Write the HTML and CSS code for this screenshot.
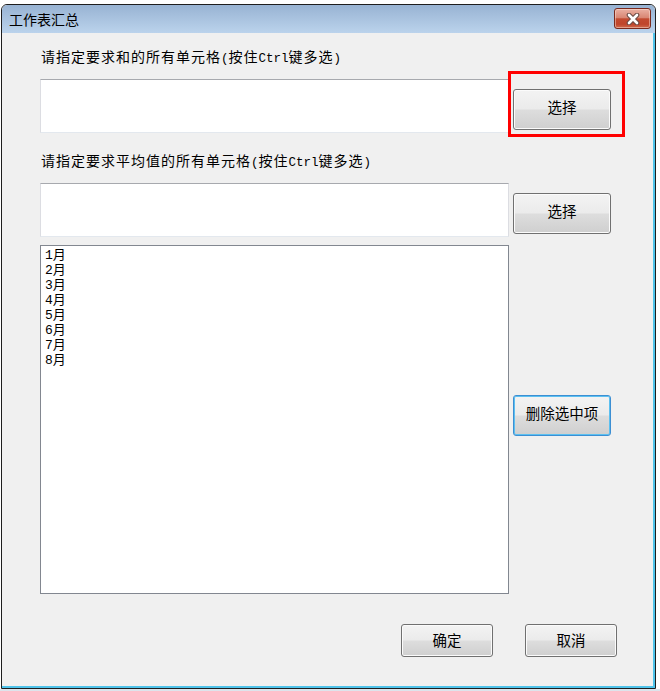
FILE: index.html
```html
<!DOCTYPE html>
<html lang="zh-CN">
<head>
<meta charset="utf-8">
<title>工作表汇总</title>
<link rel="stylesheet" href="styles.css">
</head>
<body>
<div class="window">
  <div class="titlebar">
    <span class="title">工作表汇总</span>
    <button class="close" type="button" aria-label="关闭">
      <svg width="14" height="12" viewBox="0 0 14 12">
        <path d="M3 2 L11 10 M11 2 L3 10" stroke="#6b4a44" stroke-width="4.6" stroke-linecap="round" fill="none"/>
        <path d="M3 2 L11 10 M11 2 L3 10" stroke="#ffffff" stroke-width="2.6" stroke-linecap="round" fill="none"/>
      </svg>
    </button>
  </div>
  <div class="client">
    <div class="label">请指定要求和的所有单元格<span class="a">(</span>按住<span class="a">Ctrl</span>键多选<span class="a">)</span></div>
    <div class="row">
      <div class="textbox"></div>
      <button class="btn btn-side" type="button">选择</button>
    </div>
    <div class="label label2">请指定要求平均值的所有单元格<span class="a">(</span>按住<span class="a">Ctrl</span>键多选<span class="a">)</span></div>
    <div class="row">
      <div class="textbox"></div>
      <button class="btn btn-side" type="button">选择</button>
    </div>
    <div class="row row3">
      <div class="listbox">
        <div class="item">1月</div>
        <div class="item">2月</div>
        <div class="item">3月</div>
        <div class="item">4月</div>
        <div class="item">5月</div>
        <div class="item">6月</div>
        <div class="item">7月</div>
        <div class="item">8月</div>
      </div>
      <button class="btn btn-side btn-focus" type="button">删除选中项</button>
    </div>
    <div class="footer">
      <button class="btn btn-foot" type="button">确定</button>
      <button class="btn btn-foot" type="button">取消</button>
    </div>
    <div class="highlight"></div>
  </div>
</div>
<div class="strip"></div>
</body>
</html>
```

FILE: styles.css
```css
html, body {
  margin: 0;
  padding: 0;
  background: #ffffff;
}

body {
  width: 660px;
  height: 691px;
  overflow: hidden;
  font-family: "Noto Sans CJK SC", "Noto Sans", sans-serif;
  color: #000;
}

.window {
  box-sizing: border-box;
  margin: 4px 0 0 1px;
  width: 655px;
  height: 685px;
  border: 1px solid #1e1e1e;
  border-radius: 6px 6px 0 0;
  display: flex;
  flex-direction: column;
  overflow: hidden;
}

.titlebar {
  height: 28px;
  flex: none;
  display: flex;
  align-items: flex-start;
  background: linear-gradient(#98b3d3, #bbd3ec);
  border-radius: 5px 5px 0 0;
}

.title {
  padding-left: 7px;
  font-size: 14px;
  line-height: 28px;
}

.close {
  margin: 3px 4px 0 auto;
  box-sizing: border-box;
  width: 37px;
  height: 21px;
  padding: 0;
  border: 1px solid #7a2a1e;
  border-radius: 3px;
  background: linear-gradient(#eab0a2 0%, #d98774 45%, #c24a30 52%, #c0452b 80%, #cf6a4e 100%);
  box-shadow: inset 0 0 0 1px rgba(255, 235, 225, 0.45);
  display: flex;
  align-items: center;
  justify-content: center;
}

.client {
  position: relative;
  flex: 1;
  box-sizing: border-box;
  background: #f0f0f0;
  border-right: 2px solid #4fc3ea;
  border-bottom: 2px solid #4fc3ea;
  padding: 15px 36px 0 38px;
  display: flex;
  flex-direction: column;
}

.label {
  height: 16px;
  font-size: 14px;
  line-height: 16px;
  letter-spacing: 1px;
  white-space: nowrap;
  padding-left: 1px;
}

.label .a {
  font-family: "Liberation Mono", "DejaVu Sans Mono", monospace;
  font-size: 12.5px;
  letter-spacing: 0;
}

.label2 {
  margin-top: 19px;
}

.row {
  margin-top: 15px;
  display: flex;
  align-items: flex-start;
  gap: 4px;
}

.textbox {
  box-sizing: border-box;
  width: 469px;
  height: 54px;
  background: #ffffff;
  border-top: 1px solid #a7a9ae;
  border-left: 1px solid #dcdde2;
  border-right: 1px solid #dcdde2;
  border-bottom: 1px solid #e3e8ee;
}

.btn {
  box-sizing: border-box;
  padding: 0;
  font-family: "Noto Sans CJK SC", "Noto Sans", sans-serif;
  font-size: 14.5px;
  color: #000;
  border: 1px solid #707070;
  border-radius: 3px;
  background: linear-gradient(#f3f3f3 0%, #ebebeb 48%, #dddddd 52%, #cfcfcf 100%);
  box-shadow: inset 0 0 0 1px #fbfbfb;
}

.btn-side {
  width: 98px;
  height: 41px;
  margin-top: 10px;
  padding-bottom: 6px;
}

.row3 {
  margin-top: 8px;
}

.listbox {
  box-sizing: border-box;
  width: 469px;
  height: 349px;
  background: #ffffff;
  border: 1px solid #828790;
  padding: 2px 4px;
}

.item {
  font-family: "Liberation Mono", "Noto Sans CJK SC", monospace;
  font-size: 13px;
  line-height: 15px;
}

.btn-focus {
  margin-top: 150px;
  border-color: #3c8fd3;
  box-shadow: inset 0 0 0 1px #5cc0f0;
}

.footer {
  margin-top: 30px;
  display: flex;
  justify-content: flex-end;
  gap: 32px;
}

.btn-foot {
  width: 92px;
  height: 33px;
  padding-bottom: 3px;
}

.highlight {
  position: absolute;
  left: 506px;
  top: 38px;
  width: 117px;
  height: 66px;
  box-sizing: border-box;
  border: 3px solid #ff0000;
  pointer-events: none;
}

.strip {
  height: 3px;
  background: #dde4ec;
}
```
